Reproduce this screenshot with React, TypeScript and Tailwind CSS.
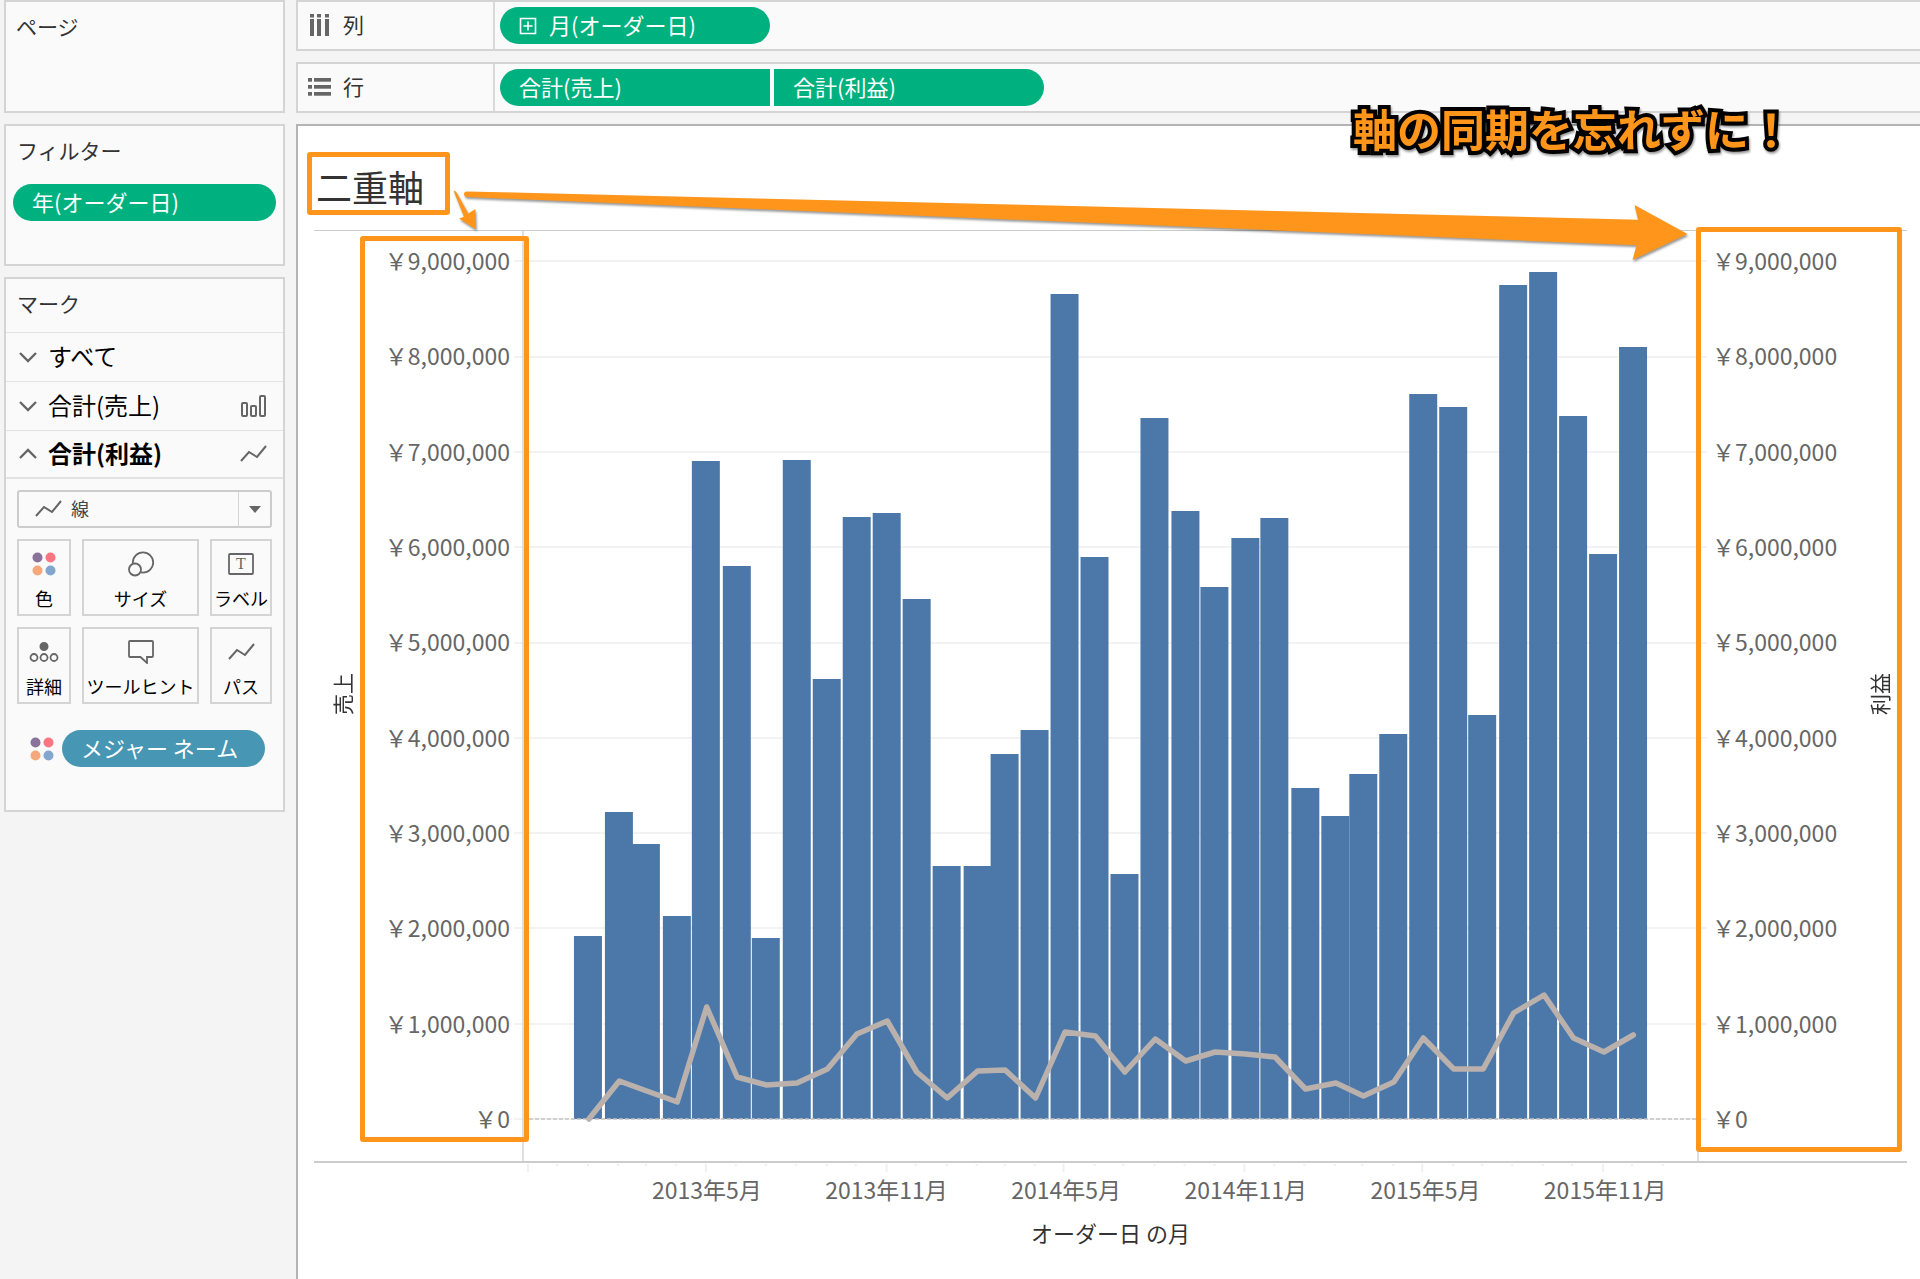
import type { ReactNode } from "react";
import { clsx } from "clsx";

const MONTHS = [
  { sales: 1.92, profit: 0 },
  { sales: 3.225, profit: 0.396 },
  { sales: 2.89, profit: 0.29 },
  { sales: 2.13, profit: 0.175 },
  { sales: 6.9, profit: 1.173 },
  { sales: 5.8, profit: 0.445 },
  { sales: 1.9, profit: 0.36 },
  { sales: 6.92, profit: 0.375 },
  { sales: 4.62, profit: 0.529 },
  { sales: 6.32, profit: 0.896 },
  { sales: 6.36, profit: 1.026 },
  { sales: 5.46, profit: 0.49 },
  { sales: 2.66, profit: 0.224 },
  { sales: 2.66, profit: 0.5 },
  { sales: 3.835, profit: 0.515 },
  { sales: 4.08, profit: 0.217 },
  { sales: 8.66, profit: 0.917 },
  { sales: 5.9, profit: 0.875 },
  { sales: 2.57, profit: 0.494 },
  { sales: 7.357, profit: 0.84 },
  { sales: 6.38, profit: 0.606 },
  { sales: 5.578, profit: 0.707 },
  { sales: 6.095, profit: 0.683 },
  { sales: 6.304, profit: 0.648 },
  { sales: 3.47, profit: 0.312 },
  { sales: 3.18, profit: 0.378 },
  { sales: 3.62, profit: 0.238 },
  { sales: 4.04, profit: 0.389 },
  { sales: 7.606, profit: 0.847 },
  { sales: 7.473, profit: 0.525 },
  { sales: 4.235, profit: 0.525 },
  { sales: 8.755, profit: 1.11 },
  { sales: 8.885, profit: 1.3 },
  { sales: 7.375, profit: 0.847 },
  { sales: 5.924, profit: 0.707 },
  { sales: 8.103, profit: 0.886 },
];

const X_LABELS = ["2013年5月", "2013年11月", "2014年5月", "2014年11月", "2015年5月", "2015年11月"];
const Y_VALUES = [9, 8, 7, 6, 5, 4, 3, 2, 1, 0];

// plot coordinates
const PLOT_W = 1176;
const PLOT_H = 930;
const ZERO_Y = 888;
const PER_MILLION = 95.3;
const PX_PER_DAY = 0.9825;
const BAR_W = 28;

const DAY = 24 * 60 * 60 * 1000;
const AXIS_START = Date.UTC(2012, 10, 1);

// month 0 is January 2013
function monthX(month: number) {
  return 6 + ((Date.UTC(2013, month, 1) - AXIS_START) / DAY) * PX_PER_DAY;
}

function valueY(value: number) {
  return Math.round(ZERO_Y - value * PER_MILLION);
}

function yen(value: number) {
  return "￥" + (value * 1000000).toLocaleString("en-US");
}

function TrendIcon() {
  return (
    <svg width="27" height="18" viewBox="0 0 27 18" fill="none" stroke="#666" strokeWidth="2">
      <path d="M1 16 L9 7 L17 12 L26 1" />
    </svg>
  );
}

function BarsIcon() {
  return (
    <svg width="27" height="24" viewBox="0 0 27 24" fill="none" stroke="#666" strokeWidth="2">
      <rect x="2" y="9" width="5" height="13" rx="1" />
      <rect x="11" y="12" width="5" height="10" rx="1" />
      <rect x="20" y="2" width="5" height="20" rx="1" />
    </svg>
  );
}

function Chevron({ up }: { up?: boolean }) {
  return (
    <svg width="18" height="12" viewBox="0 0 18 12" fill="none" stroke="#666" strokeWidth="2.4">
      <path d={up ? "M1 10 L9 2 L17 10" : "M1 2 L9 10 L17 2"} />
    </svg>
  );
}

function ColorDots() {
  return (
    <svg width="24" height="24" viewBox="0 0 24 24">
      <circle cx="5.5" cy="5.5" r="5" fill="#8a739b" />
      <circle cx="18.5" cy="5.5" r="5" fill="#fb7583" />
      <circle cx="5.5" cy="18.5" r="5" fill="#f4a87b" />
      <circle cx="18.5" cy="18.5" r="5" fill="#83a6cf" />
    </svg>
  );
}

function SizeIcon() {
  return (
    <svg width="26" height="26" viewBox="0 0 26 26" stroke="#666" strokeWidth="1.8">
      <circle cx="15" cy="11.5" r="10.2" fill="none" />
      <circle cx="7" cy="18.5" r="6" fill="#fafafa" />
    </svg>
  );
}

function LabelIcon() {
  return (
    <svg width="26" height="22" viewBox="0 0 26 22">
      <rect x="1" y="1" width="24" height="20" rx="1" fill="none" stroke="#666" strokeWidth="1.8" />
      <text x="13" y="16" textAnchor="middle" fontSize="16" fill="#666" className="font-['Liberation_Serif',serif]">
        T
      </text>
    </svg>
  );
}

function DetailIcon() {
  return (
    <svg width="30" height="20" viewBox="0 0 30 20" fill="none" stroke="#666" strokeWidth="1.8">
      <circle cx="15" cy="4.5" r="3.6" fill="#666" />
      <circle cx="5" cy="15.5" r="3.5" />
      <circle cx="15" cy="15.5" r="3.5" />
      <circle cx="25" cy="15.5" r="3.5" />
    </svg>
  );
}

function TooltipIcon() {
  return (
    <svg width="26" height="24" viewBox="0 0 26 24" fill="none" stroke="#666" strokeWidth="1.8">
      <path d="M2 1 H24 Q25 1 25 2 V16 Q25 17 24 17 H19 V23 L12.5 17 H2 Q1 17 1 16 V2 Q1 1 2 1 Z" />
    </svg>
  );
}

function ColumnsIcon() {
  return (
    <svg width="24" height="22" viewBox="0 0 24 22" fill="#666">
      {[2, 9, 17].map((x) => (
        <g key={x}>
          <rect x={x} width="4" height="3.5" />
          <rect x={x} y="5" width="4" height="17" />
        </g>
      ))}
    </svg>
  );
}

function RowsIcon() {
  return (
    <svg width="24" height="20" viewBox="0 0 24 20" fill="#666">
      {[1, 8, 15].map((y) => (
        <g key={y}>
          <rect y={y} width="4" height="3.7" />
          <rect x="6" y={y} width="17" height="3.7" />
        </g>
      ))}
    </svg>
  );
}

function Pill({ children, className }: { children: ReactNode; className?: string }) {
  return (
    <button
      type="button"
      className={clsx("flex h-[37px] items-center px-[19px] pb-1 text-[22px] leading-6 text-white", className)}
    >
      {children}
    </button>
  );
}

function Shelf({ icon, label, children }: { icon: ReactNode; label: string; children: ReactNode }) {
  return (
    <section className="flex h-[51px] shrink-0 border-2 border-r-0 border-[#d4d4d4] bg-[#fafafa]">
      <h2 className="flex w-[197px] items-center gap-[11px] border-r-2 border-[#dadada] pb-[2px] pl-[10px] text-[21px] text-[#333]">
        {icon}
        {label}
      </h2>
      <div className="flex items-center gap-1 pl-[5px]">{children}</div>
    </section>
  );
}

function MarkRow({ label, icon, open }: { label: string; icon?: ReactNode; open?: boolean }) {
  return (
    <button
      type="button"
      aria-expanded={!!open}
      className={clsx(
        "flex w-full items-center border-t border-[#e2e2e2] pr-4 pl-[13px] text-[24px] leading-8 text-black",
        open ? "h-[47px] font-bold" : "h-[49px]"
      )}
    >
      <Chevron up={open} />
      <span className="ml-[11px] flex-1 pb-[3px] text-left">{label}</span>
      {icon}
    </button>
  );
}

function MarkCard({ label, icon }: { label: string; icon: ReactNode }) {
  return (
    <button
      type="button"
      className="flex h-[77px] flex-col items-center border-2 border-[#d4d4d4] text-[18px] leading-[22px] whitespace-nowrap text-black"
    >
      <span className="flex h-[46px] items-center">{icon}</span>
      {label}
    </button>
  );
}

function ValueAxis({ title, side }: { title: string; side: "left" | "right" }) {
  const right = side === "right";
  return (
    <div className={clsx("relative flex w-[209px] shrink-0", right && "flex-row-reverse")}>
      <div className="flex w-[56px] items-center justify-center pb-1">
        <span className="rotate-180 text-[21px] leading-6 text-[#333] [text-orientation:sideways] [writing-mode:vertical-rl]">
          {title}
        </span>
      </div>
      <ul
        className={clsx(
          "flex flex-1 flex-col justify-between pt-[17px] pb-[31px] text-[23px] leading-6 text-[#666]",
          right ? "pl-[14px] text-left" : "pr-[13px] text-right"
        )}
      >
        {Y_VALUES.map((v) => (
          <li key={v}>{yen(v)}</li>
        ))}
      </ul>
      <div
        className={clsx(
          "absolute z-10 rounded-[3px] border-[5px] border-[#ff961b]",
          right ? "-top-1 right-[5px] bottom-[9px] -left-[2px]" : "top-[5px] -right-[6px] bottom-[19px] left-[46px]"
        )}
      />
    </div>
  );
}

function Plot() {
  const line = MONTHS.map((m, i) => `${monthX(i)},${valueY(m.profit)}`).join(" ");

  return (
    <svg
      viewBox={`0 0 ${PLOT_W} ${PLOT_H}`}
      preserveAspectRatio="none"
      className="h-full min-w-0 flex-1 overflow-visible"
      role="img"
      aria-label="売上と利益"
    >
      {Y_VALUES.map((v) => (
        <line key={v} x1="-9" x2={PLOT_W + 9} y1={valueY(v)} y2={valueY(v)} stroke="#f3f3f3" strokeWidth="2" />
      ))}
      <line x1="0" x2="0" y1="0" y2={PLOT_H} stroke="#d4d4d4" strokeWidth="1.5" />
      <line x1={PLOT_W} x2={PLOT_W} y1="0" y2={PLOT_H} stroke="#d4d4d4" strokeWidth="1.5" />
      {MONTHS.map((m, i) => (
        <rect
          key={i}
          x={Math.floor(monthX(i) - BAR_W / 2)}
          y={valueY(m.sales)}
          width={BAR_W}
          height={ZERO_Y - valueY(m.sales)}
          fill="#4c78a9"
        />
      ))}
      <line
        x1="6"
        x2={PLOT_W}
        y1={ZERO_Y}
        y2={ZERO_Y}
        stroke="#c4c4c4"
        strokeWidth="1.5"
        strokeDasharray="4 2"
      />
      <polyline
        points={line}
        fill="none"
        stroke="#bab0ac"
        strokeWidth="5.5"
        strokeLinejoin="round"
        strokeLinecap="round"
      />
      {/* month ticks, longer every half year */}
      {Array.from({ length: 39 }, (_, i) => i - 2).map((month) => {
        const x = Math.round(monthX(month)) - 1;
        const major = month === -2 || (month > 0 && (month - 4) % 6 === 0);
        return (
          <line key={month} x1={x} x2={x} y1={PLOT_H + 3} y2={PLOT_H + (major ? 11 : 5)} stroke="#f0f0f0" strokeWidth="2" />
        );
      })}
    </svg>
  );
}

function Sidebar() {
  return (
    <aside className="flex w-[281px] shrink-0 flex-col gap-[11px]">
      <section className="h-[113px] border-2 border-[#d4d4d4] bg-[#fafafa] px-[10px] pt-[10px]">
        <h2 className="text-[21px] leading-7 text-[#333]">ページ</h2>
      </section>

      <section className="h-[142px] border-2 border-[#d4d4d4] bg-[#fafafa] px-[7px] pt-[10px]">
        <h2 className="pl-1 text-[21px] leading-7 text-[#333]">フィルター</h2>
        <Pill className="mt-5 w-full rounded-full bg-[#00b180]">年(オーダー日)</Pill>
      </section>

      <section className="border-2 border-[#d4d4d4] bg-[#fafafa] pb-[43px]">
        <h2 className="flex h-[53px] items-center pb-[3px] pl-[11px] text-[21px] text-[#333]">マーク</h2>
        <MarkRow label="すべて" />
        <MarkRow label="合計(売上)" icon={<BarsIcon />} />
        <MarkRow label="合計(利益)" icon={<TrendIcon />} open />

        <div className="border-t-2 border-[#e2e2e2] px-[11px] pt-[11px]">
          <div className="relative h-[38px]">
            <select
              aria-label="マークの種類"
              className="h-full w-full appearance-none rounded-[3px] border-2 border-[#ccc] bg-[#fafafa] pb-[2px] pl-[52px] text-[18px] text-[#444]"
            >
              <option>線</option>
            </select>
            <span className="pointer-events-none absolute inset-y-0 left-[18px] flex items-center">
              <TrendIcon />
            </span>
            <span className="pointer-events-none absolute inset-y-[2px] right-[2px] flex w-8 items-center justify-center border-l border-[#d4d4d4]">
              <svg width="12" height="7" viewBox="0 0 12 7" fill="#666">
                <path d="M0 0 H12 L6 7 Z" />
              </svg>
            </span>
          </div>

          <div className="mt-[11px] grid grid-cols-[54px_1fr_62px] gap-[11px]">
            <MarkCard label="色" icon={<ColorDots />} />
            <MarkCard label="サイズ" icon={<SizeIcon />} />
            <MarkCard label="ラベル" icon={<LabelIcon />} />
            <MarkCard label="詳細" icon={<DetailIcon />} />
            <MarkCard label="ツールヒント" icon={<TooltipIcon />} />
            <MarkCard label="パス" icon={<TrendIcon />} />
          </div>

          <div className="mt-[26px] flex items-center gap-2 pr-[7px] pl-[13px]">
            <ColorDots />
            <Pill className="flex-1 rounded-full bg-[#4796b4] whitespace-nowrap">メジャー ネーム</Pill>
          </div>
        </div>
      </section>
    </aside>
  );
}

function Worksheet() {
  return (
    <section className="relative flex-1 border-t-2 border-l-2 border-[#b4b4b4] bg-white">
      <div className="h-[104px] pt-[26px] pl-[9px]">
        <h1 className="flex h-[63px] w-[143px] items-center rounded-[3px] border-[5px] border-[#ff961b] pt-1 pl-1 text-[36px] leading-9 whitespace-nowrap text-[#333]">
          二重軸
        </h1>
      </div>

      <div className="mr-[13px] ml-4">
        <div className="flex h-[933px] border-t border-b-2 border-t-[#ccc] border-b-[#ccc]">
          <ValueAxis title="売上" side="left" />
          <Plot />
          <ValueAxis title="利益" side="right" />
        </div>
        <div className="mx-[209px] pt-[14px] text-center text-[22px] leading-6">
          <ul className="grid grid-cols-6 pr-[3px] pl-[94px] text-[23px] whitespace-nowrap text-[#666]">
            {X_LABELS.map((label) => (
              <li key={label}>{label}</li>
            ))}
          </ul>
          <p className="mt-[19px] text-[#333]">オーダー日 の月</p>
        </div>
      </div>

      {/* annotations over the view */}
      <svg
        viewBox="0 0 32 46"
        className="absolute top-[62px] left-[152px] h-[46px] w-8 drop-shadow-[1px_2px_1px_rgba(0,0,0,0.4)]"
        fill="#ff961b"
      >
        <path d="M3.5 2.5 L6 3.5 L18.3 25.5 L25.3 21 L26 41.5 L9 30.5 L14 28.7 Z" />
      </svg>
      <div className="absolute top-[60px] right-[228px] left-[160px] h-[80px]">
        <svg
          viewBox="0 0 1234 80"
          preserveAspectRatio="none"
          className="h-full w-full drop-shadow-[1px_2px_1px_rgba(0,0,0,0.4)]"
          fill="#ff961b"
        >
          <path d="M9 5.5 L1180 33.7 L1176.5 19 L1229.5 48 L1174.5 74 L1178.5 59.3 L9 11 Q6 10.5 6 8 Q6 5.5 9 5.5 Z" />
        </svg>
      </div>
      <p className="absolute -top-5 right-[127px] text-[44px] leading-[44px] font-bold whitespace-nowrap text-[#ff961b] drop-shadow-[1px_2px_1px_rgba(0,0,0,0.4)] [-webkit-text-stroke:8px_#000] [paint-order:stroke_fill]">
        軸の同期を忘れずに！
      </p>
    </section>
  );
}

export default function App() {
  return (
    <div
      lang="ja"
      className="flex min-h-screen gap-[11px] bg-[#f4f4f4] pl-1 font-['Noto_Sans_CJK_JP','Liberation_Sans',sans-serif]"
    >
      <Sidebar />
      <main className="flex min-w-0 flex-1 flex-col gap-[11px]">
        <Shelf icon={<ColumnsIcon />} label="列">
          <Pill className="w-[270px] gap-3 rounded-full bg-[#00b180]">
            <svg width="18" height="18" viewBox="0 0 18 18" fill="none" stroke="#fff" strokeWidth="1.6" className="mt-1">
              <path d="M1.5 1.5 H16.5 V16.5 H1.5 Z M9 4.5 V13.5 M4.5 9 H13.5" />
            </svg>
            月(オーダー日)
          </Pill>
        </Shelf>
        <Shelf icon={<RowsIcon />} label="行">
          <Pill className="w-[270px] rounded-l-full bg-[#00b180]">合計(売上)</Pill>
          <Pill className="w-[270px] rounded-r-full bg-[#00b180]">合計(利益)</Pill>
        </Shelf>
        <Worksheet />
      </main>
    </div>
  );
}
